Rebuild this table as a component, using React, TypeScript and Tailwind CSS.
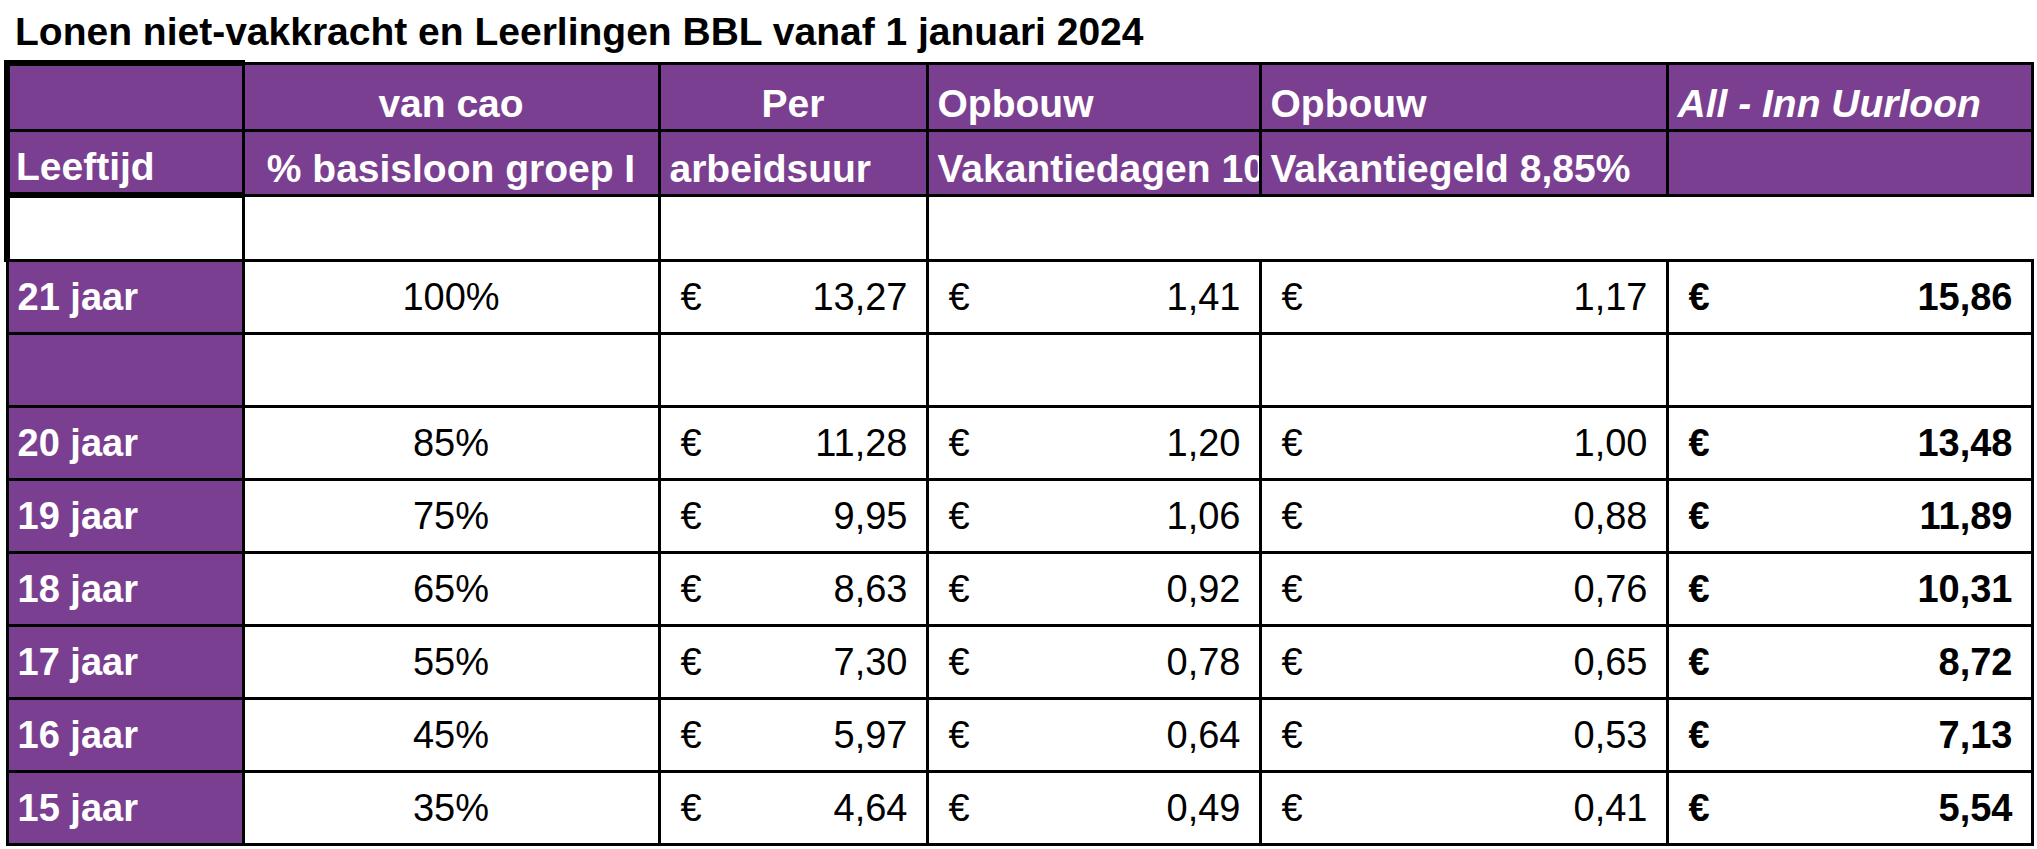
import React from "react";

type Row = {
  age: string;
  pct: string;
  base: string;
  dagen: string;
  geld: string;
  total: string;
} | null;

const rows: Row[] = [
  { age: "21 jaar", pct: "100%", base: "13,27", dagen: "1,41", geld: "1,17", total: "15,86" },
  null,
  { age: "20 jaar", pct: "85%", base: "11,28", dagen: "1,20", geld: "1,00", total: "13,48" },
  { age: "19 jaar", pct: "75%", base: "9,95", dagen: "1,06", geld: "0,88", total: "11,89" },
  { age: "18 jaar", pct: "65%", base: "8,63", dagen: "0,92", geld: "0,76", total: "10,31" },
  { age: "17 jaar", pct: "55%", base: "7,30", dagen: "0,78", geld: "0,65", total: "8,72" },
  { age: "16 jaar", pct: "45%", base: "5,97", dagen: "0,64", geld: "0,53", total: "7,13" },
  { age: "15 jaar", pct: "35%", base: "4,64", dagen: "0,49", geld: "0,41", total: "5,54" },
];

const font = "font-['Liberation_Sans',Arial,sans-serif]";
const cell = "border-[3px] border-black p-0";
const head = `${cell} bg-[#7b3f91] text-white font-bold text-[39px] leading-none align-bottom`;

function Money({ value, bold = false }: { value: string; bold?: boolean }) {
  return (
    <div className={`flex items-center justify-between pl-[20px] pr-[18px] ${bold ? "font-bold" : ""}`}>
      <span>€</span>
      <span>{value}</span>
    </div>
  );
}

export default function App() {
  return (
    <div className={`min-h-screen bg-white text-black ${font}`}>
      <div className="h-[60px] pl-[15px] pt-[12px] text-[39px] font-bold leading-none whitespace-nowrap">
        Lonen niet-vakkracht en Leerlingen BBL vanaf 1 januari 2024
      </div>

      <table className="ml-[4px] w-[2028px] table-fixed border-collapse">
        <colgroup>
          <col className="w-[236px]" />
          <col className="w-[416px]" />
          <col className="w-[268px]" />
          <col className="w-[333px]" />
          <col className="w-[407px]" />
          <col className="w-[365px]" />
        </colgroup>
        <tbody>
          <tr className="h-[67px]">
            <td className={`${head} border-t-[6px] border-l-[6px]`} />
            <td className={`${head} text-center`}>
              <div className="pb-[6px]">van cao</div>
            </td>
            <td className={`${head} text-center`}>
              <div className="pb-[6px]">Per</div>
            </td>
            <td className={head}>
              <div className="pb-[6px] pl-[9px]">Opbouw</div>
            </td>
            <td className={head}>
              <div className="pb-[6px] pl-[9px]">Opbouw</div>
            </td>
            <td className={head}>
              <div className="pb-[6px] pl-[9px] italic">All - Inn Uurloon</div>
            </td>
          </tr>
          <tr className="h-[65px]">
            <td className={`${head} border-l-[6px] border-b-[6px]`}>
              <div className="pb-[6px] pl-[6px]">Leeftijd</div>
            </td>
            <td className={`${head} text-center`}>
              <div className="pb-[6px]">% basisloon groep I</div>
            </td>
            <td className={head}>
              <div className="pb-[6px] pl-[9px]">arbeidsuur</div>
            </td>
            <td className={head}>
              <div className="overflow-hidden whitespace-nowrap pb-[6px] pl-[9px]">Vakantiedagen 10,64%</div>
            </td>
            <td className={head}>
              <div className="overflow-hidden whitespace-nowrap pb-[6px] pl-[9px]">Vakantiegeld 8,85%</div>
            </td>
            <td className={head} />
          </tr>
          <tr className="h-[65px]">
            <td className={`${cell} border-l-[6px]`} />
            <td className={cell} />
            <td className={cell} />
            <td colSpan={3} className="border-y-[3px] border-l-[3px] border-r-0 border-black p-0" />
          </tr>

          {rows.map((r, i) =>
            r ? (
              <tr key={i} className="h-[73px] text-[38px] leading-none">
                <td className={`${cell} bg-[#7b3f91] font-bold text-white`}>
                  <div className="pl-[9px]">{r.age}</div>
                </td>
                <td className={`${cell} text-center`}>{r.pct}</td>
                <td className={cell}>
                  <Money value={r.base} />
                </td>
                <td className={cell}>
                  <Money value={r.dagen} />
                </td>
                <td className={cell}>
                  <Money value={r.geld} />
                </td>
                <td className={cell}>
                  <Money value={r.total} bold />
                </td>
              </tr>
            ) : (
              <tr key={i} className="h-[73px]">
                <td className={`${cell} bg-[#7b3f91]`} />
                <td className={cell} />
                <td className={cell} />
                <td className={cell} />
                <td className={cell} />
                <td className={cell} />
              </tr>
            ),
          )}
        </tbody>
      </table>
    </div>
  );
}
